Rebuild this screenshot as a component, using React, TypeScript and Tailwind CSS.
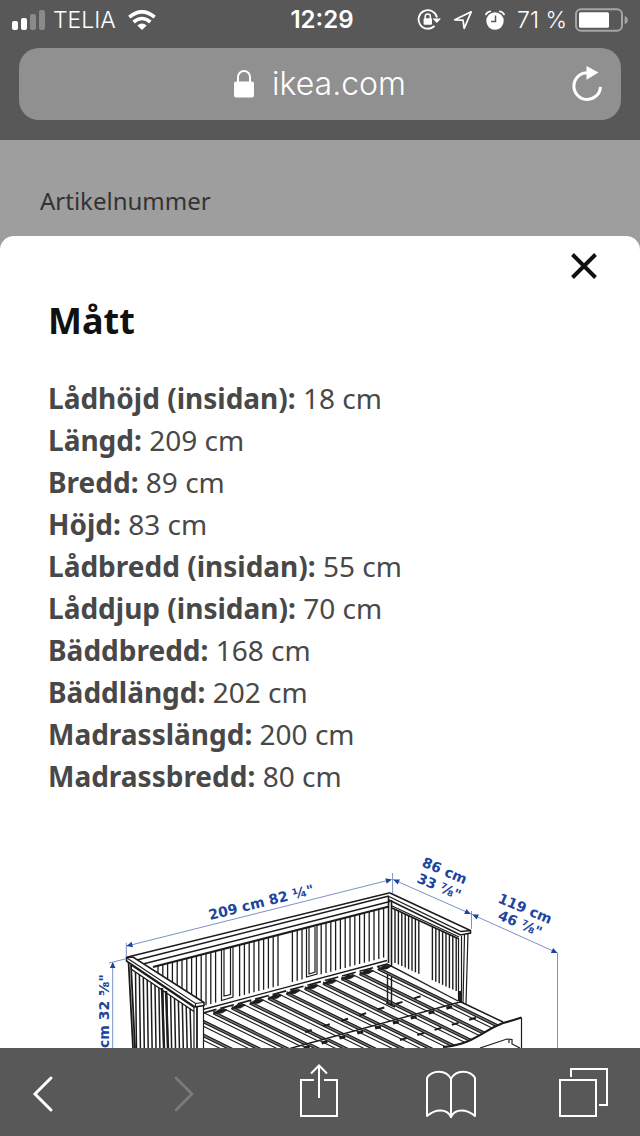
import type { ReactNode } from "react";

const measurements: [string, string][] = [
  ["Lådhöjd (insidan):", "18 cm"],
  ["Längd:", "209 cm"],
  ["Bredd:", "89 cm"],
  ["Höjd:", "83 cm"],
  ["Lådbredd (insidan):", "55 cm"],
  ["Låddjup (insidan):", "70 cm"],
  ["Bäddbredd:", "168 cm"],
  ["Bäddlängd:", "202 cm"],
  ["Madrasslängd:", "200 cm"],
  ["Madrassbredd:", "80 cm"],
];

function range(from: number, to: number, step: number) {
  const out: number[] = [];
  for (let v = from; v <= to; v += step) out.push(v);
  return out;
}

function StatusBar() {
  return (
    <div className="grid h-10 grid-cols-3 items-center pr-3 pl-3 text-white">
      <div className="flex items-center gap-2">
        <svg className="h-5 w-[33px]" viewBox="0 0 33 20" aria-hidden="true">
          <rect x="0" y="11" width="6" height="9" rx="2" fill="#fff" />
          <rect x="9" y="8" width="6" height="12" rx="2" fill="#fff" />
          <rect x="18" y="4" width="6" height="16" rx="2" fill="#8a8a8a" />
          <rect x="27" y="0" width="6" height="20" rx="2" fill="#8a8a8a" />
        </svg>
        <span className="mr-1 text-[23px] font-light">TELIA</span>
        <svg className="h-5 w-7" viewBox="0 0 28 20" fill="none" stroke="#fff" strokeWidth="3.6" aria-hidden="true">
          <path d="M1.3 7.2 Q14 -3.6 26.7 7.2" />
          <path d="M5.6 12 Q14 5 22.4 12" />
          <path d="M14 20 L9.3 15.4 Q14 11.8 18.7 15.4 Z" fill="#fff" stroke="none" />
        </svg>
      </div>
      <div className="pl-1 text-center text-2xl font-semibold">12:29</div>
      <div className="flex items-center justify-end gap-2">
        <svg className="h-6 w-6 shrink-0" viewBox="0 0 24 24" fill="none" stroke="#fff" strokeWidth="1.8" aria-hidden="true">
          <path d="M20 9.5 A9.3 9.3 0 1 0 17.5 18" />
          <path d="M15.5 10.6 H24 L19.8 15 Z" fill="#fff" stroke="none" />
          <rect x="6.6" y="10.3" width="8.4" height="6.4" rx="1" fill="#fff" stroke="none" />
          <path d="M8.2 11 V8.6 A2.6 2.6 0 0 1 13.4 8.6 V11" strokeWidth="1.5" />
        </svg>
        <svg className="ml-1 h-5 w-5 shrink-0" viewBox="0 0 20 20" fill="none" stroke="#fff" strokeWidth="1.7" strokeLinejoin="round" aria-hidden="true">
          <path d="M18.2 1.8 L1.8 9.8 L10 10.2 L11.2 18.4 Z" />
        </svg>
        <svg className="ml-1 h-5 w-5 shrink-0" viewBox="0 0 20 20" fill="none" aria-hidden="true">
          <circle cx="10" cy="11" r="8.7" fill="#fff" />
          <path d="M1 4.4 Q2.2 1.7 5.2 1.3 M19 4.4 Q17.8 1.7 14.8 1.3" stroke="#fff" strokeWidth="1.8" strokeLinecap="round" />
          <path d="M10.5 5.5 V11.5 H6" stroke="#585858" strokeWidth="1.5" />
        </svg>
        <span className="ml-1 whitespace-nowrap text-[23px] font-light">71 %</span>
        <svg className="h-6 w-[53px] shrink-0" viewBox="0 0 53 24" aria-hidden="true">
          <rect x="1" y="1.2" width="46" height="21.6" rx="5" fill="none" stroke="#a5a5a5" strokeWidth="2" />
          <rect x="4" y="4.3" width="30" height="15.5" rx="1.5" fill="#fff" />
          <path d="M49.7 8 Q52.8 9 52.8 12 Q52.8 15 49.7 16 Z" fill="#a5a5a5" />
        </svg>
      </div>
    </div>
  );
}

function AddressBar() {
  return (
    <div className="mx-[19px] mt-2 grid h-[72px] grid-cols-[1fr_auto_1fr] items-center rounded-[20px] bg-[#909090] px-4 text-white">
      <button type="button" className="col-start-2 flex items-center gap-[18px] text-[32px] leading-10 font-light">
        <svg className="h-7 w-5" viewBox="0 0 20 28" aria-hidden="true">
          <rect x="0" y="11.5" width="20" height="16" rx="2" fill="#fff" />
          <path d="M4 12.5 V7 A6 6 0 0 1 16 7 V12.5" fill="none" stroke="#fff" strokeWidth="2" />
        </svg>
        ikea.com
      </button>
      <button type="button" aria-label="Ladda om" className="justify-self-end">
        <svg className="h-9 w-9" viewBox="0 0 36 36" aria-hidden="true">
          <path d="M18.5 6.8 A13.3 13.3 0 1 0 31.5 20.8" fill="none" stroke="#fff" strokeWidth="3" />
          <path d="M17.5 0 L29.5 6.4 L17.5 13.8 Z" fill="#fff" />
        </svg>
      </button>
    </div>
  );
}

function Arrow({ x, y, angle }: { x: number; y: number; angle: number }) {
  return <path d="M0 0 L-6 -2.8 L-6 2.8 Z" fill="#1d449c" transform={`translate(${x} ${y}) rotate(${angle})`} />;
}

function Label({ x, y, angle, children }: { x: number; y: number; angle: number; children: string }) {
  return (
    <text
      transform={`translate(${x} ${y}) rotate(${angle})`}
      fill="#1b459f"
      className="font-['DejaVu_Sans',sans-serif] text-[14px] font-bold"
    >
      {children}
    </text>
  );
}

function Slat({ x, y, length }: { x: number; y: number; length: number }) {
  const dy = length * 0.49;
  return (
    <g>
      <path d={`M${x} ${y} l${length} ${dy}`} strokeWidth="1.1" />
      <path d={`M${x - 9} ${y + 4.6} l${length} ${dy}`} strokeWidth="2.8" stroke="#777" />
      <path d={`M${x - 9} ${y + 3.4} l${length} ${dy} M${x - 9} ${y + 6} l${length} ${dy}`} strokeWidth="1.1" />
    </g>
  );
}

function DaybedDrawing() {
  const back = range(158, 386, 4.8).filter(
    (x) => !(x > 218 && x < 236) && !(x > 281 && x < 290) && !(x > 304 && x < 319),
  );
  const side = range(395, 457, 3.4).filter((x) => !(x > 422 && x < 430));
  const front = range(135.5, 193, 3.9);

  return (
    <svg viewBox="0 845 640 203" className="block w-full" role="img" aria-label="Måttskiss av dagbädd">
      <defs>
        <clipPath id="bed-base">
          <path d="M203 1013 L387 963 L461 1002 L290 1049 H203 Z" />
        </clipPath>
        <clipPath id="trundle-base">
          <path d="M290 1049 L461 1003 L502 1022 Q486 1039 445 1049 Z" />
        </clipPath>
      </defs>
      <g fill="none" stroke="#1c1c1c" strokeWidth="1.2">
        {/* back panel */}
        <path d="M126.7 957.3 L390 892.7 M137 960 L389 896 M143 964 L390 901.5" strokeWidth="1.4" />
        <path d="M153 967 L389 906.5" strokeWidth="2" />
        {back.map((x) => {
          const top = 967 - (x - 153) * 0.256;
          const bottom = x < 203 ? 975 + (x - 158) * 0.64 : 1006 - (x - 203) * 0.268;
          return <path key={x} d={`M${x} ${top} V${bottom}`} strokeWidth="1.3" />;
        })}
        <path d="M221.5 949.5 L233 946.5 V997 L221.5 1000.5 Z M224 950 V996 L230.5 994.5 V948" />
        <path d="M306.5 927.5 L317 925 V974 L306.5 977 Z M309 928 V974 L315 972 V927" />
        <path d="M203 1009.5 L387 960.5" strokeWidth="1.3" />
        <path d="M203 1013 L387 964" strokeWidth="1.6" strokeDasharray="14 4" />

        {/* slatted base */}
        <g clipPath="url(#bed-base)">
          {range(-4, 10, 1).map((k) => (
            <Slat key={k} x={204 + k * 18.3} y={1012.8 - k * 4.9} length={120} />
          ))}
        </g>
        {range(0, 9, 1).map((k) => (
          <path
            key={k}
            d={`M${213 + k * 18.3} ${1013.5 - k * 4.9} l7 -4.5 l7 1 l-5 3 Z`}
            fill="#1c1c1c"
            strokeWidth="0.8"
          />
        ))}
        <path d="M387.5 975 V1004 M391.5 977 V1006 M386 1003 L395 1007" strokeWidth="1.4" />

        {/* trundle */}
        <g clipPath="url(#trundle-base)">
          {range(0, 11, 1).map((k) => (
            <Slat key={k} x={268 + k * 18.3} y={1043 - k * 4.9} length={110} />
          ))}
        </g>
        <path d="M290 1048.5 L460 1002" strokeWidth="1.4" />
        <path d="M286 1053 L456 1005.5" strokeWidth="3" strokeDasharray="6 12.5" />
        <path d="M305 1032 L428 994" strokeWidth="2" strokeDasharray="7 12" />
        <path d="M400 1040 L482 1016" strokeWidth="2" strokeDasharray="7 11" />
        <path d="M461 1002 L503 1022" strokeWidth="1.5" />
        <path d="M443 1048 C474 1045 482 1031 503 1023 Q511 1021 521.5 1017.5 V1050 H443 Z" fill="#fff" stroke="none" />
        <path d="M443 1047 C474 1044 482 1031 503 1023 Q511 1021 521.5 1017.5" strokeWidth="2.2" />
        <path d="M521.5 1017.5 V1049" strokeWidth="1.2" />
        <path d="M480 1048 L507 1039 L512 1039.5 V1044 L520 1048 M509 1040 V1043" />

        {/* right end */}
        <path d="M390 893 L470.5 930.5 V933 L460.5 935 L389 900" fill="#fff" strokeWidth="1.6" />
        <path d="M389 896.5 L461 931.5 L470.5 930.5 M391 905.5 L459 937" strokeWidth="1.3" />
        <path d="M392 908 L458 938.5" strokeWidth="1.8" />
        <path d="M388.5 897 V963 M391.5 900 V966" strokeWidth="1.6" />
        {side.map((x) => (
          <path key={x} d={`M${x} ${908 + (x - 393) * 0.47} V${962 + (x - 393) * 0.46}`} strokeWidth="1.4" />
        ))}
        <path d="M387 964 L458 1001" strokeWidth="1.4" />
        <path d="M458.5 938 V1001 M461.5 936 V996 M468 933 L466 1004 M464.5 935 L463 1003" strokeWidth="1.2" />
        <path d="M460.5 991 V1003" strokeWidth="3" />

        {/* left end */}
        <path d="M128.5 961 L133 1048 M131 965 L135 1048" strokeWidth="1.8" />
        {front.map((x) => (
          <path key={x} d={`M${x} ${971 + (x - 134) * 0.67} L${x + 1} 1048`} strokeWidth={1.5} />
        ))}
        <path d="M162 988 L164 1048 M166 991 L168 1048" strokeWidth="2.4" />
        <path d="M131 965 L195 1008 M131 969 L194 1011.5" strokeWidth="1.5" />
        <path d="M194 1006 V1049 H203.5 V1005 Z" fill="#fff" />
        <path d="M197 1007 V1048" strokeWidth="1.8" />
        <path d="M126.5 957.5 L133 957 L204 1002.5 V1005.5 L195 1007 L126.5 961 Z" fill="#fff" strokeWidth="1.6" />
        <path d="M127 958 L195.5 1003.5 L204 1002.5 M195.5 1003.5 V1007" />
      </g>

      <g stroke="#6d87bd" strokeWidth="0.9" fill="none">
        <path d="M127 946 L391.5 879.5 M126.3 943 V957 M392.6 873 V893" />
        <path d="M393 879.5 L471 914 L557.5 953 M471.5 911 V929 M557.5 953 V1048" />
        <path d="M112.7 963 V1048 M109 963 L125 959" />
      </g>
      <Arrow x={126.5} y={946} angle={166} />
      <Arrow x={391.8} y={879.5} angle={-14} />
      <Arrow x={393.3} y={879.5} angle={204} />
      <Arrow x={470.8} y={914} angle={24} />
      <Arrow x={472.3} y={914.5} angle={204} />
      <Arrow x={557.5} y={953} angle={24} />
      <Arrow x={112.7} y={962} angle={-90} />

      <Label x={210} y={920} angle={-14}>209 cm 82 ¼"</Label>
      <Label x={421} y={866} angle={23}>86 cm</Label>
      <Label x={416} y={882} angle={23}>33 ⅞"</Label>
      <Label x={497} y={902} angle={23}>119 cm</Label>
      <Label x={497} y={919} angle={23}>46 ⅞"</Label>
      <Label x={109} y={1048} angle={-90}>cm 32 ⅝"</Label>
    </svg>
  );
}

function ToolButton({ label, className, disabled, children }: { label: string; className?: string; disabled?: boolean; children: ReactNode }) {
  return (
    <button type="button" aria-label={label} disabled={disabled} className={className}>
      {children}
    </button>
  );
}

function Toolbar() {
  return (
    <nav className="grid h-[88px] shrink-0 grid-cols-[114fr_140fr_130fr_134fr_122fr] items-center justify-items-center bg-[#585858]">
      <ToolButton label="Bakåt" className="justify-self-start pl-8">
        <svg className="h-14 w-[22px]" viewBox="0 0 22 56" fill="none" stroke="#fff" strokeWidth="3" strokeLinecap="round" aria-hidden="true">
          <path d="M19 14 L3 30 L19 46" />
        </svg>
      </ToolButton>
      <ToolButton label="Framåt" disabled>
        <svg className="h-14 w-[22px]" viewBox="0 0 22 56" fill="none" stroke="#7c7c7c" strokeWidth="2.6" strokeLinecap="round" aria-hidden="true">
          <path d="M3 14 L19 30 L3 46" />
        </svg>
      </ToolButton>
      <ToolButton label="Dela">
        <svg className="h-14 w-10" viewBox="0 0 40 56" fill="none" stroke="#fff" strokeWidth="2" aria-hidden="true">
          <path d="M15 16 H2 V52 H38 V16 H25 M20 34 V1.5 M12 9.5 L20 1.5 L28 9.5" />
        </svg>
      </ToolButton>
      <ToolButton label="Bokmärken">
        <svg className="h-14 w-[52px]" viewBox="0 0 52 56" fill="none" stroke="#fff" strokeWidth="2" strokeLinejoin="round" aria-hidden="true">
          <path d="M26 54 V15 Q22.5 7.7 14 7.7 Q5.5 7.7 2 14 V52 Q8.5 46.5 15.5 46.5 Q23 46.5 26 53 Q29 46.5 36.5 46.5 Q43.5 46.5 50 52 V14 Q46.5 7.7 38 7.7 Q29.5 7.7 26 15" />
        </svg>
      </ToolButton>
      <ToolButton label="Flikar" className="justify-self-end pr-8">
        <svg className="h-14 w-[50px]" viewBox="0 0 50 56" fill="none" stroke="#fff" strokeWidth="2" aria-hidden="true">
          <rect x="2" y="16" width="36" height="36" />
          <path d="M13 13 V5 H49 V41 H41" />
        </svg>
      </ToolButton>
    </nav>
  );
}

export default function App() {
  return (
    <div className="flex h-screen flex-col bg-[#9e9e9e] font-['Noto_Sans',sans-serif]">
      <header className="h-[140px] shrink-0 bg-[#585858] font-[Inter,sans-serif]">
        <StatusBar />
        <AddressBar />
      </header>
      <p className="shrink-0 px-10 pt-[43px] pb-[17px] text-2xl leading-9 text-[#333333]">Artikelnummer</p>
      <main role="dialog" aria-labelledby="sheet-title" className="min-h-0 flex-1 overflow-hidden rounded-t-[14px] bg-white">
        <div className="flex justify-end pt-1.5 pr-8">
          <button type="button" aria-label="Stäng" className="flex size-12 items-center justify-center">
            <svg className="size-7" viewBox="0 0 28 28" fill="none" stroke="#111" strokeWidth="4" aria-hidden="true">
              <path d="M2.5 2.5 L25.5 25.5 M25.5 2.5 L2.5 25.5" />
            </svg>
          </button>
        </div>
        <div className="px-12 pt-[7px]">
          <h1 id="sheet-title" className="text-4xl leading-[48px] font-bold text-[#111111]">Mått</h1>
          <ul className="mt-8 text-[28px] leading-[42px] text-[#484848]">
            {measurements.map(([name, value]) => (
              <li key={name}>
                <strong className="font-bold">{name}</strong> {value}
              </li>
            ))}
          </ul>
        </div>
        <figure className="mt-12">
          <DaybedDrawing />
        </figure>
      </main>
      <Toolbar />
    </div>
  );
}
